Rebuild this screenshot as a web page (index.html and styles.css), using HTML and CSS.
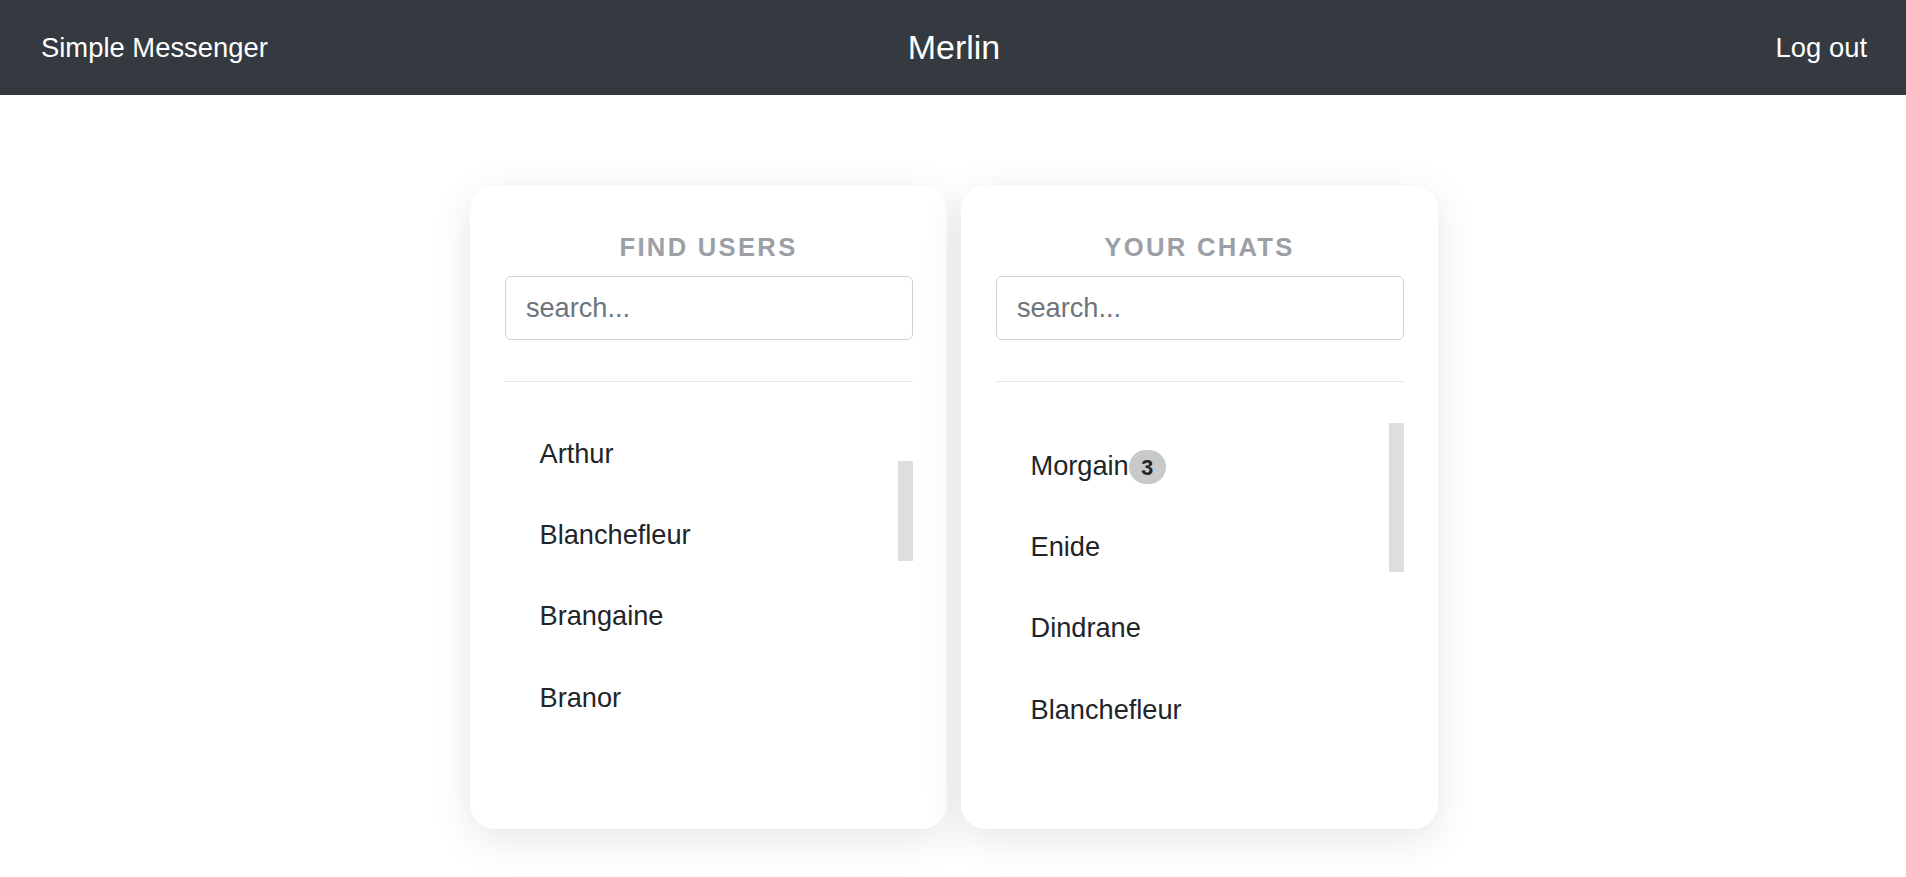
FILE: index.html
```html
<!DOCTYPE html>
<html lang="en">
<head>
<meta charset="utf-8">
<title>Simple Messenger</title>
<link rel="stylesheet" href="styles.css">
</head>
<body>
<header class="navbar">
  <a class="navbar-brand" href="#">Simple Messenger</a>
  <div class="navbar-user">Merlin</div>
  <a class="navbar-logout" href="#">Log out</a>
</header>
<main class="panels">
  <section class="card">
    <h2 class="card-title">Find users</h2>
    <input class="search" type="text" placeholder="search...">
    <hr class="divider">
    <div class="list-viewport">
      <ul class="list list-scrolled">
        <li class="list-item">Arthur</li>
        <li class="list-item">Blanchefleur</li>
        <li class="list-item">Brangaine</li>
        <li class="list-item">Branor</li>
      </ul>
      <div class="scroll-thumb" style="top:39px;height:100px"></div>
    </div>
  </section>
  <section class="card">
    <h2 class="card-title">Your chats</h2>
    <input class="search" type="text" placeholder="search...">
    <hr class="divider">
    <div class="list-viewport">
      <ul class="list">
        <li class="list-item">Morgain<span class="badge">3</span></li>
        <li class="list-item">Enide</li>
        <li class="list-item">Dindrane</li>
        <li class="list-item">Blanchefleur</li>
      </ul>
      <div class="scroll-thumb" style="top:1px;height:149px"></div>
    </div>
  </section>
</main>
</body>
</html>
```
FILE: styles.css
```css
html {
  font-size: 27.2px;
}

body {
  margin: 0;
  font-family: "Liberation Sans", Arial, Helvetica, sans-serif;
  color: #212529;
  background: #fff;
}

.navbar {
  height: 95px;
  box-sizing: border-box;
  padding: 0 39px 0 41px;
  background: #343a40;
  display: grid;
  grid-template-columns: 1fr auto 1fr;
  align-items: center;
}

.navbar-brand,
.navbar-logout {
  color: #fff;
  text-decoration: none;
  font-size: 27.4px;
}

.navbar-brand {
  justify-self: start;
}

.navbar-logout {
  justify-self: end;
}

.navbar-user {
  color: #fff;
  font-size: 34px;
}

.panels {
  display: flex;
  justify-content: center;
  gap: 14px;
  padding: 90px 0 60px 2px;
}

.card {
  width: 477px;
  box-sizing: border-box;
  padding: 47px 34.5px 82.5px;
  background: #fff;
  border-radius: 25px;
  box-shadow: 0 10px 40px rgba(0, 0, 0, 0.1);
}

.card-title {
  margin: 0 0 13px;
  font-size: 25.6px;
  line-height: 1.2;
  font-weight: 700;
  letter-spacing: 2.3px;
  text-transform: uppercase;
  text-align: center;
  color: #9aa0a5;
}

.search {
  display: block;
  width: 100%;
  height: 64px;
  box-sizing: border-box;
  margin: 0;
  padding: 0 20.4px;
  font-family: inherit;
  font-size: 27.2px;
  color: #495057;
  background: #fff;
  border: 1px solid #ced4da;
  border-radius: 6px;
  outline: none;
}

.search::placeholder {
  color: #6c757d;
  opacity: 1;
}

.divider {
  margin: 41.6px 0 39.5px;
  height: 0;
  border: 0;
  border-top: 1px solid #e6e6e6;
}

.list-viewport {
  position: relative;
  height: 325px;
  overflow: hidden;
}

.list {
  list-style: none;
  margin: 0;
  padding: 4px 0 0;
}

.list-scrolled {
  margin-top: -12px;
}

.list-item {
  padding: 20.2px 34px 20.2px 35px;
  font-size: 27.2px;
  line-height: 1.5;
}

.badge {
  display: inline-block;
  padding: 7.5px 12.5px 5px;
  font-size: 21.5px;
  font-weight: 700;
  line-height: 1;
  color: #212529;
  background: #c8c9ca;
  border-radius: 999px;
  vertical-align: baseline;
}

.scroll-thumb {
  position: absolute;
  right: 0;
  width: 15px;
  background: #dedede;
}
```
